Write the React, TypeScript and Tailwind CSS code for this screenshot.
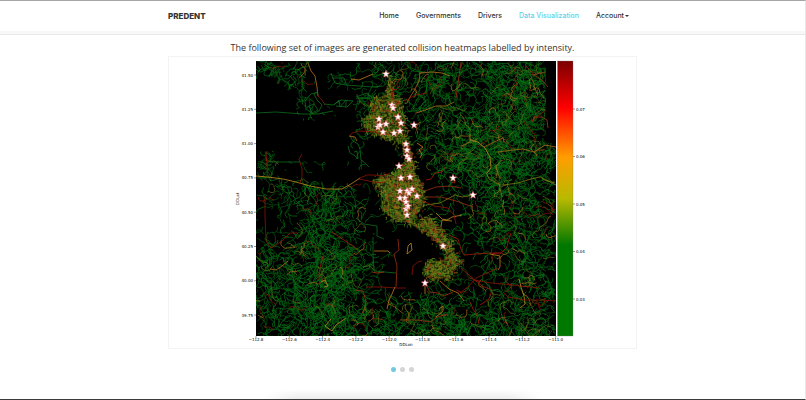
import { useState } from "react";

type Point = [number, number];

const NAV_LINKS = [
	{ label: "Home", href: "#home" },
	{ label: "Governments", href: "#governments" },
	{ label: "Drivers", href: "#drivers" },
	{ label: "Data Visualization", href: "#data", active: true },
];

const LAT_TICKS = [
	"41.50",
	"41.25",
	"41.00",
	"40.75",
	"40.50",
	"40.25",
	"40.00",
	"39.75",
];
const LON_TICKS = [
	"−112.8",
	"−112.6",
	"−112.4",
	"−112.2",
	"−112.0",
	"−111.8",
	"−111.6",
	"−111.4",
	"−111.2",
	"−111.0",
];
const SCALE_TICKS = ["0.07", "0.06", "0.05", "0.04", "0.03"];

const MAP_WIDTH = 300;
const MAP_HEIGHT = 275;

// Rural road density, one digit per 10x10 cell of the map
const ROAD_DENSITY = [
	"665432000022354345553376676770",
	"345340021113244345773356767760",
	"002341022111332325775356777770",
	"000031000012333235662125677760",
	"000043011134432433451235677770",
	"000021110044421234443567777750",
	"000000000044431135566677777660",
	"000000000113321135666777776650",
	"000000000110011235667787776655",
	"530000000110001024567787766656",
	"641122100110001104567777676665",
	"431021000000111001233578776654",
	"233222211211221100122356766544",
	"123345665311111111111235654444",
	"123456775321111111111236765533",
	"101234765321111111111235665544",
	"101134554310011002211246655444",
	"212335554421010000221123556544",
	"443346655431100000111113466555",
	"554457777731110000111112345555",
	"664456788841100000121112344455",
	"664456888731100001222112334455",
	"554345777731100001222222334445",
	"665556666541112332222233333445",
	"556677776554323343332333333344",
	"445577877664334465665543455543",
	"334556666565545667776655566765",
	"111234455666655667786666566776",
];

const CITIES: { outline: Point[]; count: number }[] = [
	{
		outline: [[132, 16], [137, 18], [138, 36], [146, 38], [148, 52], [149, 66], [152, 80], [155, 92], [158, 104], [154, 108], [149, 94], [146, 84], [138, 80], [127, 76], [117, 74], [108, 66], [108, 58], [116, 50], [114, 40], [128, 34], [132, 28]],
		count: 950,
	},
	{
		outline: [[142, 108], [152, 100], [160, 106], [158, 114], [165, 120], [169, 134], [168, 146], [160, 154], [154, 161], [140, 160], [130, 152], [126, 148], [128, 138], [124, 128], [116, 122], [124, 114], [136, 114]],
		count: 1400,
	},
	{
		outline: [[150, 160], [162, 160], [174, 155], [184, 168], [194, 180], [198, 192], [207, 201], [198, 208], [194, 219], [186, 216], [174, 219], [168, 212], [172, 200], [188, 199], [193, 194], [182, 184], [172, 172], [160, 167]],
		count: 900,
	},
];

const HIGHWAYS: { color: string; points: string }[] = [
	{ color: "#c08a1c", points: "0,115 12,116 27,118 40,121 54,125 70,128 86,128 95,123 104,117" },
	{ color: "#8c1408", points: "104,117 111,114 118,114 128,115 134,112" },
	{ color: "#8c1408", points: "103,118 118,121 128,122" },
	{ color: "#b8741c", points: "52,2 55,10 59,15 61,26 62,35" },
	{ color: "#8c1408", points: "62,35 66,39 69,44" },
	{ color: "#0d6d1c", points: "0,52 20,51 47,53 62,53 77,50" },
	{ color: "#0d6d1c", points: "75,12 79,22 90,24 117,26 126,25" },
	{ color: "#0d6d1c", points: "76,17 88,17 90,22" },
	{ color: "#c07a1c", points: "95,18 103,19 110,16 117,13" },
	{ color: "#0d6d1c", points: "68,43 77,44 85,39 97,40 91,46 80,45" },
	{ color: "#0d6d1c", points: "78,44 83,39 84,46 90,39 90,46" },
	{ color: "#0d6d1c", points: "100,36 111,32 114,37 102,37" },
	{ color: "#0d6d1c", points: "62,31 55,33 49,40 50,48 57,53 63,50 66,44 61,39 58,33 62,31" },
	{ color: "#0d6d1c", points: "53,45 58,43 62,49 56,52 53,45" },
	{ color: "#8c1408", points: "94,75 96,72 104,70 118,71 125,73" },
	{ color: "#0d6d1c", points: "94,75 97,80 102,83 104,88 105,99 109,102 113,106" },
	{ color: "#0d6d1c", points: "92,85 94,92 98,94 102,98 101,90 98,91" },
	{ color: "#b8741c", points: "93,75 99,76 101,80" },
	{ color: "#0d6d1c", points: "14,101 28,101 44,101" },
	{ color: "#8c1408", points: "46,93 43,98 46,108 46,116 44,122" },
	{ color: "#8c1408", points: "10,90 11,106 12,116" },
	{ color: "#8c1408", points: "9,135 9,155 10,180 15,187 26,180 34,172 42,172" },
	{ color: "#b8741c", points: "14,208 20,209 26,205 32,200" },
	{ color: "#a31a08", points: "67,195 64,207 63,219" },
	{ color: "#c08a1c", points: "65,221 69,219 72,225 68,226" },
	{ color: "#a31a08", points: "76,171 88,179 97,185 102,189" },
	{ color: "#0d6d1c", points: "117,176 117,194 118,210 140,212" },
	{ color: "#0d6d1c", points: "100,157 108,163 121,165 121,175 128,178" },
	{ color: "#8c1408", points: "110,226 125,226 141,227 150,227" },
	{ color: "#9c2f10", points: "142,178 143,189 138,193 141,205 140,226" },
	{ color: "#c07a1c", points: "118,190 132,190 134,192" },
	{ color: "#a33c10", points: "116,211 121,212 128,211" },
	{ color: "#c07a1c", points: "139,226 136,233 133,239 131,248" },
	{ color: "#9c2f10", points: "99,229 107,230 110,240 109,248 106,252" },
	{ color: "#c08a1c", points: "75,258 69,265 76,270 80,264 90,257" },
	{ color: "#9c2f10", points: "205,1 203,15 201,30 200,37" },
	{ color: "#a86c18", points: "164,11 163,20 158,30 154,36 151,42" },
	{ color: "#8c1408", points: "148,40 160,34 171,32" },
	{ color: "#a86c18", points: "160,52 172,48 180,45 190,45 198,41" },
	{ color: "#b8741c", points: "164,12 176,11 186,12 194,15" },
	{ color: "#9c2f10", points: "270,5 278,14 286,19 292,26" },
	{ color: "#a33c10", points: "276,14 290,11" },
	{ color: "#a33c10", points: "276,61 278,56 286,56 291,59 292,67" },
	{ color: "#8c1408", points: "276,60 286,52 290,49" },
	{ color: "#c28a20", points: "214,73 214,79 222,81 229,87 234,96 235,107 231,112" },
	{ color: "#b8601c", points: "228,86 238,81 247,77 248,81" },
	{ color: "#a86c18", points: "242,91 257,89 267,88 278,91 289,84 300,86" },
	{ color: "#7e7e14", points: "230,111 233,118 243,123 246,136" },
	{ color: "#7e7e14", points: "247,124 262,122 275,118 284,116 300,124" },
	{ color: "#c28a20", points: "161,82 167,86 163,89 166,93 164,97" },
	{ color: "#a31a08", points: "189,106 186,111 179,112 175,118 170,119" },
	{ color: "#9c2f10", points: "169,130 180,126 194,125 205,127" },
	{ color: "#9c2f10", points: "169,136 185,136 200,140 217,146" },
	{ color: "#7e7e14", points: "170,144 184,142 199,134 206,136 217,134" },
	{ color: "#a31a08", points: "197,117 199,122 195,121" },
	{ color: "#c07a1c", points: "180,152 186,158 191,159 196,156 206,154" },
	{ color: "#c07a1c", points: "185,166 186,159 196,160" },
	{ color: "#8c1408", points: "167,140 178,145 192,147 198,154 200,163" },
	{ color: "#a31a08", points: "193,174 202,178 205,188 208,194 220,193 235,192 244,193 251,186 252,181 255,172" },
	{ color: "#c07a1c", points: "234,193 244,195 244,206 242,209" },
	{ color: "#a31a08", points: "205,207 214,215 220,220 226,225 236,229 233,238 224,244" },
	{ color: "#8c1408", points: "204,232 213,225 220,217 231,212 242,207" },
	{ color: "#8c1408", points: "218,219 235,222 247,223 265,225 284,227" },
	{ color: "#c28a20", points: "263,218 265,226 268,235 269,243 264,247" },
	{ color: "#8c1408", points: "247,231 252,236 268,239 286,239 300,240" },
	{ color: "#a31a08", points: "214,241 217,248 221,254 223,263" },
	{ color: "#8c1408", points: "156,214 157,205 162,201 166,200" },
	{ color: "#c28a20", points: "151,193 152,185 155,182 156,189 151,193" },
	{ color: "#9c2f10", points: "169,222 174,231 182,232 188,235 197,231" },
	{ color: "#c07a1c", points: "169,221 169,233" },
	{ color: "#c07a1c", points: "183,248 187,245 187,250 180,256" },
	{ color: "#9c2f10", points: "144,259 162,259 175,261 181,256 192,253" },
	{ color: "#b8741c", points: "184,220 193,228 202,232 208,240" },
	{ color: "#8c1408", points: "136,39 137,26 140,24 144,18" },
	{ color: "#a31a08", points: "136,28 140,29 144,25" },
];

const COLLISIONS: Point[] = [
	[130, 13], [136, 44], [137, 47], [123, 58], [142, 56], [145, 62],
	[122, 66], [130, 63], [124, 64], [158, 64], [127, 71], [138, 72],
	[144, 70], [150, 83], [151, 89], [151, 95], [153, 98], [143, 105],
	[145, 117], [154, 116], [197, 117], [217, 134], [144, 130], [151, 130],
	[153, 132], [156, 128], [144, 137], [149, 137], [161, 135], [150, 141],
	[150, 148], [152, 145], [151, 154], [187, 185], [169, 222],
];

// Seeded so that the map is the same on every render
function createRandom(seed: number) {
	let state = seed;
	return () => {
		state = (state * 1664525 + 1013904223) % 4294967296;
		return state / 4294967296;
	};
}

function isInside([x, y]: Point, outline: Point[]): boolean {
	let inside = false;
	for (let i = 0, j = outline.length - 1; i < outline.length; j = i++) {
		const [xi, yi] = outline[i];
		const [xj, yj] = outline[j];
		if (yi > y !== yj > y && x < ((xj - xi) * (y - yi)) / (yj - yi) + xi) {
			inside = !inside;
		}
	}
	return inside;
}

function pick(random: () => number, choices: [string, number][]): string {
	let value = random();
	for (const [color, weight] of choices) {
		value -= weight;
		if (value < 0) return color;
	}
	return choices[0][0];
}

function densityAt(x: number, y: number): number {
	return Number(ROAD_DENSITY[Math.floor(y / 10)]?.[Math.floor(x / 10)] ?? 0);
}

function buildRuralRoads(): [string, string][] {
	const random = createRandom(41);
	const paths: Record<string, string> = {};
	ROAD_DENSITY.forEach((row, rowIndex) => {
		[...row].forEach((digit, column) => {
			const density = Number(digit);
			const count = (density * density) / 7 + density * 0.25;
			for (let i = 0; i < count; i++) {
				let x = (column + random()) * 10;
				let y = (rowIndex + random()) * 10;
				let heading = random() * Math.PI * 2;
				const color = pick(random, [
					["#067716", 0.5],
					["#055c10", 0.42],
					["#5c7014", 0.04],
					["#8c1c0a", 0.02],
					["#a8701a", 0.02],
				]);
				let d = `M${x.toFixed(1)} ${y.toFixed(1)}`;
				const steps = 5 + Math.floor(random() * 7);
				for (let step = 0; step < steps; step++) {
					heading += (random() - 0.5) * 1.9;
					x += Math.cos(heading) * 2;
					y += Math.sin(heading) * 2;
					if (densityAt(x, y) === 0) break;
					d += `L${x.toFixed(1)} ${y.toFixed(1)}`;
				}
				paths[color] = (paths[color] ?? "") + d;
			}
		});
	});
	return Object.entries(paths);
}

function buildStreets(): [string, string][] {
	const random = createRandom(7);
	const paths: Record<string, string> = {};
	for (const { outline, count } of CITIES) {
		const xs = outline.map(([x]) => x);
		const ys = outline.map(([, y]) => y);
		const left = Math.min(...xs) - 4;
		const top = Math.min(...ys) - 4;
		const width = Math.max(...xs) - left + 4;
		const height = Math.max(...ys) - top + 4;
		for (let placed = 0; placed < count; ) {
			const x = left + random() * width;
			const y = top + random() * height;
			if (!isInside([x + random() * 7 - 3, y + random() * 7 - 3], outline)) {
				continue;
			}
			const color = pick(random, [
				["#5c8418", 0.38],
				["#86801a", 0.24],
				["#1f7a16", 0.18],
				["#a0641a", 0.11],
				["#932812", 0.09],
			]);
			const length = (1 + random() * 2.5).toFixed(1);
			paths[color] =
				(paths[color] ?? "") +
				`M${x.toFixed(1)} ${y.toFixed(1)}${random() < 0.5 ? "h" : "v"}${length}`;
			placed++;
		}
	}
	return Object.entries(paths);
}

const RURAL_ROADS = buildRuralRoads();
const STREETS = buildStreets();

function Heatmap() {
	return (
		<svg
			viewBox="-87 -4 467 291"
			className="block w-full"
			role="img"
			aria-label="Collision heatmap"
			fontFamily="'DejaVu Sans', sans-serif"
			fontSize="4"
			fill="#000"
		>
			<defs>
				<linearGradient id="scale" x1="0" x2="0" y1="0" y2="1">
					<stop offset="0" stopColor="#7c0000" />
					<stop offset="0.17" stopColor="#ff0000" />
					<stop offset="0.35" stopColor="#ff9e00" />
					<stop offset="0.5" stopColor="#b9b900" />
					<stop offset="0.67" stopColor="#007800" />
					<stop offset="1" stopColor="#007800" />
				</linearGradient>
				<clipPath id="map-area">
					<rect width={MAP_WIDTH} height={MAP_HEIGHT} />
				</clipPath>
			</defs>

			{/* Map */}
			<g clipPath="url(#map-area)" fill="none" strokeLinejoin="round">
				<rect width={MAP_WIDTH} height={MAP_HEIGHT} fill="#000" />
				{RURAL_ROADS.map(([color, d]) => (
					<path key={color} d={d} stroke={color} strokeWidth="0.7" />
				))}
				{CITIES.map(({ outline }) => (
					<polygon
						key={outline.join(" ")}
						points={outline.join(" ")}
						fill="#3f4a0c"
						fillOpacity="0.45"
					/>
				))}
				{STREETS.map(([color, d]) => (
					<path key={color} d={d} stroke={color} strokeWidth="0.7" />
				))}
				{HIGHWAYS.map(({ color, points }) => (
					<polyline
						key={points}
						points={points}
						stroke={color}
						strokeWidth="0.8"
					/>
				))}
				{COLLISIONS.map(([x, y]) => (
					<path
						key={`${x}-${y}`}
						transform={`translate(${x} ${y})`}
						d="M0 -3.7L1.1 -1.2L3.7 -1.1L1.6 0.6L2.3 3.2L0 1.8L-2.3 3.2L-1.6 0.6L-3.7 -1.1L-1.1 -1.2Z"
						fill="#fff"
						stroke="#f0525c"
						strokeWidth="0.5"
					/>
				))}
			</g>

			{/* Axes */}
			<g textAnchor="end">
				{LAT_TICKS.map((label, i) => (
					<g key={label} transform={`translate(0 ${14 + i * 34.3})`}>
						<path d="M-2 0H0" stroke="#333" strokeWidth="0.5" />
						<text x="-3" y="1.5">
							{label}
						</text>
					</g>
				))}
			</g>
			<g textAnchor="middle">
				{LON_TICKS.map((label, i) => (
					<g
						key={label}
						transform={`translate(${i * 33.3} ${MAP_HEIGHT})`}
					>
						<path d="M0 0V2" stroke="#333" strokeWidth="0.5" />
						<text y="5">{label}</text>
					</g>
				))}
				<text x="150" y="284.5">
					DDLon
				</text>
				<text transform="translate(-17 138) rotate(-90)">DDLat</text>
			</g>

			{/* Colour scale */}
			<rect
				x="301.5"
				width="15.5"
				height={MAP_HEIGHT}
				fill="url(#scale)"
				stroke="#777"
				strokeWidth="0.3"
			/>
			{SCALE_TICKS.map((label, i) => (
				<g key={label} transform={`translate(317 ${48 + i * 47.5})`}>
					<path d="M0 0H2" stroke="#333" strokeWidth="0.5" />
					<text x="3" y="1.5">
						{label}
					</text>
				</g>
			))}
		</svg>
	);
}

export default function App() {
	const [slide, setSlide] = useState(0);

	return (
		<div className="flex min-h-screen flex-col border-t border-r border-b border-t-[#a5a5a5] border-r-[#e8e8e8] border-b-[#3a3a3c] bg-white font-['Inter',sans-serif] text-[#333]">
			<header className="border-b border-[#e9e9e9]">
				<div className="border-b-3 border-[#f7f7f7]">
					<div className="mx-auto flex h-[30px] w-full max-w-[469px] items-center justify-between pr-2">
						<a href="#top" className="text-[8px] font-extrabold">
							PREDENT
						</a>
						<nav className="flex items-center gap-[17px] text-[7px] font-medium">
							{NAV_LINKS.map(({ label, href, active }) => (
								<a
									key={label}
									href={href}
									className={active ? "text-[#63cfe8]" : undefined}
								>
									{label}
								</a>
							))}
							<button type="button" className="flex items-center gap-px">
								Account
								<svg viewBox="0 0 4 2" className="w-1" fill="#333">
									<path d="M0 0H4L2 2Z" />
								</svg>
							</button>
						</nav>
					</div>
				</div>
			</header>

			<main className="mx-auto w-full max-w-[469px] flex-1 pt-1.5">
				<h1 className="pb-px text-center font-['Open_Sans',sans-serif] text-[9px] leading-[14px]">
					The following set of images are generated collision heatmaps
					labelled by intensity.
				</h1>
				<figure className="border border-[#f3f3f3]">
					<Heatmap />
				</figure>
				<div className="flex justify-center gap-1 pt-[18px]">
					{[0, 1, 2].map((index) => (
						<button
							key={index}
							type="button"
							aria-label={`Show heatmap ${index + 1}`}
							onClick={() => setSlide(index)}
							className={`size-[5px] rounded-full ${
								slide === index ? "bg-[#6fcade]" : "bg-[#d4d4d4]"
							}`}
						/>
					))}
				</div>
			</main>

			<div className="mx-auto h-2.5 w-[35%] bg-linear-to-b from-white to-[#ececec] [mask-image:linear-gradient(to_right,transparent,black_12%,black_88%,transparent)]" />
		</div>
	);
}
